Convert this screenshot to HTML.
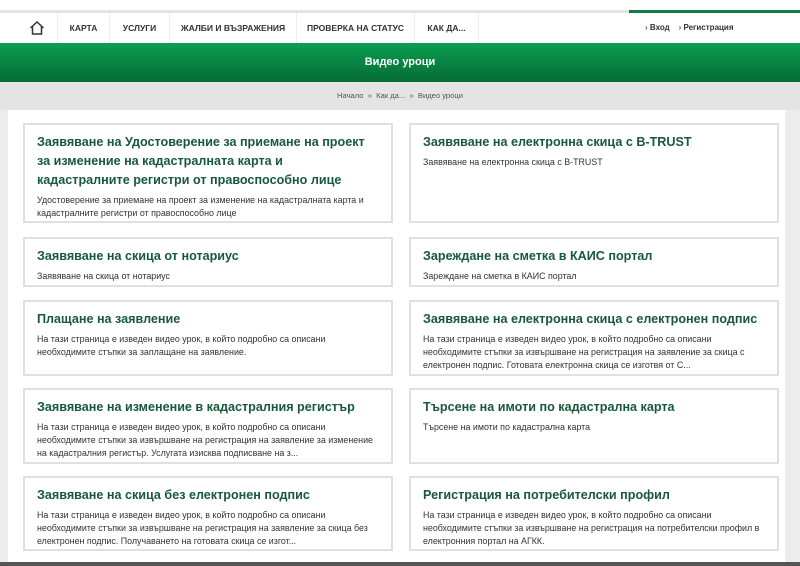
<!DOCTYPE html>
<html><head><meta charset="utf-8"><style>
*{margin:0;padding:0;box-sizing:border-box}
body{width:800px;height:566px;overflow:hidden;background:#ececec;font-family:"Liberation Sans","DejaVu Sans",sans-serif;position:relative}
.top{position:absolute;left:0;top:0;width:800px;height:10px;background:#fff}
.gl{position:absolute;left:0;top:10px;width:800px;height:3px;background:#e2e2e2}
.gl2{position:absolute;left:629px;top:10px;width:171px;height:3px;background:#137a45}
.nav{position:absolute;left:0;top:13px;width:800px;height:30px;background:#fff;font-size:8.5px;font-weight:bold;color:#333}
.nav div{position:absolute;top:0;height:30px;line-height:30px;border-right:1px solid #eee;text-align:center}
.ban{position:absolute;left:0;top:43px;width:800px;height:39px;background:linear-gradient(#0a9e52,#066b33);color:#fff;font-size:11px;font-weight:bold;text-align:center;line-height:39px}
.bc{position:absolute;left:0;top:82px;width:800px;height:28px;background:#e4e4e4;font-size:7.6px;color:#555;line-height:28px;text-align:center}
.main{position:absolute;left:8px;top:110px;width:777px;height:452px;background:#fff}
.bot{position:absolute;left:0;top:562px;width:800px;height:4px;background:#555}
.card{position:absolute;border:2px solid #e0e0e0;background:#fff;padding:8px 12px 0 12px}
.card h3{font-size:12.6px;line-height:19px;color:#17593a;font-weight:bold;white-space:nowrap}
.card p{font-size:8.9px;line-height:13px;color:#333;margin-top:4px;white-space:nowrap}
.l{left:23px;width:370px}.r{left:409px;width:370px}
.ar{color:#137a45;font-weight:bold}
</style></head><body>
<div class="top"></div><div class="gl"></div><div class="gl2"></div>
<div class="nav">
<div style="left:16px;width:42px;border-left:0"><svg width="16" height="14" viewBox="0 0 16 14" style="margin-top:8px"><path d="M1.5 7 L8 1 L14.5 7 M3.5 5.5 V13 H12.5 V5.5" fill="none" stroke="#333" stroke-width="1.5"/></svg></div>
<div style="left:58px;width:52px">КАРТА</div>
<div style="left:110px;width:60px">УСЛУГИ</div>
<div style="left:170px;width:127px">ЖАЛБИ И ВЪЗРАЖЕНИЯ</div>
<div style="left:297px;width:118px">ПРОВЕРКА НА СТАТУС</div>
<div style="left:415px;width:64px">КАК ДА...</div>
<div style="left:645px;width:150px;border:0;text-align:left;font-weight:bold;font-size:8px"><span class="ar">›</span> Вход &nbsp;&nbsp; <span class="ar">›</span> Регистрация</div>
</div>
<div class="ban">Видео уроци</div>
<div class="bc">Начало &nbsp;»&nbsp; Как да... &nbsp;»&nbsp; Видео уроци</div>
<div class="main"></div>
<div class="card l" style="top:123px;height:100px"><h3>Заявяване на Удостоверение за приемане на проект<br>за изменение на кадастралната карта и<br>кадастралните регистри от правоспособно лице</h3><p>Удостоверение за приемане на проект за изменение на кадастралната карта и<br>кадастралните регистри от правоспособно лице</p></div>
<div class="card r" style="top:123px;height:100px"><h3>Заявяване на електронна скица с B-TRUST</h3><p>Заявяване на електронна скица с B-TRUST</p></div>
<div class="card l" style="top:237px;height:50px"><h3>Заявяване на скица от нотариус</h3><p>Заявяване на скица от нотариус</p></div>
<div class="card r" style="top:237px;height:50px"><h3>Зареждане на сметка в КАИС портал</h3><p>Зареждане на сметка в КАИС портал</p></div>
<div class="card l" style="top:300px;height:76px"><h3>Плащане на заявление</h3><p>На тази страница е изведен видео урок, в който подробно са описани<br>необходимите стъпки за заплащане на заявление.</p></div>
<div class="card r" style="top:300px;height:76px"><h3>Заявяване на електронна скица с електронен подпис</h3><p>На тази страница е изведен видео урок, в който подробно са описани<br>необходимите стъпки за извършване на регистрация на заявление за скица с<br>електронен подпис. Готовата електронна скица се изготвя от С...</p></div>
<div class="card l" style="top:388px;height:76px"><h3>Заявяване на изменение в кадастралния регистър</h3><p>На тази страница е изведен видео урок, в който подробно са описани<br>необходимите стъпки за извършване на регистрация на заявление за изменение<br>на кадастралния регистър. Услугата изисква подписване на з...</p></div>
<div class="card r" style="top:388px;height:76px"><h3>Търсене на имоти по кадастрална карта</h3><p>Търсене на имоти по кадастрална карта</p></div>
<div class="card l" style="top:476px;height:75px"><h3>Заявяване на скица без електронен подпис</h3><p>На тази страница е изведен видео урок, в който подробно са описани<br>необходимите стъпки за извършване на регистрация на заявление за скица без<br>електронен подпис. Получаването на готовата скица се изгот...</p></div>
<div class="card r" style="top:476px;height:75px"><h3>Регистрация на потребителски профил</h3><p>На тази страница е изведен видео урок, в който подробно са описани<br>необходимите стъпки за извършване на регистрация на потребителски профил в<br>електронния портал на АГКК.</p></div>
<div class="bot"></div>
</body></html>
